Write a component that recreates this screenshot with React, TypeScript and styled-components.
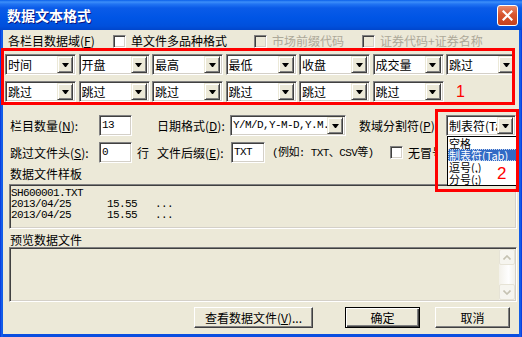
import React from "react";
import styled, { createGlobalStyle } from "styled-components";

const uiFont = `"Noto Sans CJK SC", "Liberation Sans", sans-serif`;
const monoFont = `"Liberation Mono", "Noto Sans CJK SC", monospace`;

const GlobalStyle = createGlobalStyle`
  html, body {
    margin: 0;
    padding: 0;
    background: #fff;
  }
  body {
    font-family: ${uiFont};
    font-size: 12px;
    color: #000;
  }
  * {
    box-sizing: border-box;
  }
`;

const Window = styled.div`
  width: 522px;
  height: 337px;
  display: flex;
  flex-direction: column;
  background: linear-gradient(to right, #0831d9 0, #166aee 2px, #0a4ee0 3px, #0a4ee0 519px, #166aee 520px, #0831d9 522px);
`;

const TitleBar = styled.div`
  height: 30px;
  flex: none;
  display: flex;
  align-items: center;
  justify-content: space-between;
  padding: 0 4px 0 7px;
  background: linear-gradient(
    to bottom,
    #0a5fea 0px,
    #3d8ff9 2px,
    #2275f3 4px,
    #0a5be8 8px,
    #0055e5 18px,
    #0050dc 26px,
    #0046cc 30px
  );
`;

const Title = styled.span`
  color: #fff;
  font-family: ${uiFont};
  font-weight: bold;
  font-size: 14px;
  text-shadow: 1px 1px 0 #0a1883;
`;

const CloseButton = styled.div`
  width: 21px;
  height: 21px;
  border: 1px solid #fff;
  border-radius: 3px;
  background: linear-gradient(to bottom, #e8896a, #d7552f 45%, #c7411c);
  display: flex;
  align-items: center;
  justify-content: center;
  margin-top: 1px;
`;

const Body = styled.div`
  flex: 1;
  margin: 0 3px 3px;
  background: #ece9d8;
  padding: 4px 2px 0 6px;
  display: flex;
  flex-direction: column;
`;

const TopRow = styled.div`
  display: flex;
  align-items: center;
  height: 14px;
  margin-left: -1px;
`;

const Text = styled.span<{
  $w?: number;
  $pl?: number;
  $ml?: number;
  $mono?: boolean;
  $gray?: boolean;
  $clip?: boolean;
}>`
  ${(p) => (p.$w !== undefined ? `width: ${p.$w}px; flex: none;` : "")}
  padding-left: ${(p) => p.$pl ?? 0}px;
  margin-left: ${(p) => p.$ml ?? 0}px;
  font-family: ${(p) => (p.$mono ? monoFont : uiFont)};
  font-size: ${(p) => (p.$mono ? "11px" : "12px")};
  letter-spacing: ${(p) => (p.$mono ? "-0.6px" : "0")};
  color: ${(p) => (p.$gray ? "#aca899" : "#000")};
  white-space: nowrap;
  overflow: ${(p) => (p.$clip ? "hidden" : "visible")};
  line-height: 18px;
`;

const CheckItem = styled.label<{ $w?: number }>`
  display: flex;
  align-items: center;
  gap: 5px;
  ${(p) => (p.$w !== undefined ? `width: ${p.$w}px; flex: none;` : "")}
`;

const CheckBox = styled.span<{ $disabled?: boolean; $ml?: number }>`
  width: 13px;
  height: 13px;
  flex: none;
  margin-left: ${(p) => p.$ml ?? 0}px;
  background: ${(p) => (p.$disabled ? "#ece9d8" : "#fff")};
  border-style: solid;
  border-width: 1px;
  border-color: #808080 #fff #fff #808080;
  box-shadow: inset 1px 1px 0 #404040, inset -1px -1px 0 #d4d0c8;
`;

const FieldsFrame = styled.div`
  margin-left: -8px;
  width: 514px;
  height: 57px;
  border: 3px solid #ff0000;
  padding: 3px 0 0 1px;
  display: grid;
  grid-template-columns: repeat(7, 71px);
  grid-auto-rows: 21px;
  column-gap: 2.5px;
  row-gap: 6px;
  overflow: hidden;
`;

const ComboBox = styled.div<{ $w?: number }>`
  width: ${(p) => (p.$w ? `${p.$w}px` : "100%")};
  height: 21px;
  flex: none;
  display: flex;
  align-items: center;
  background: #fff;
  border-style: solid;
  border-width: 1px;
  border-color: #808080 #fff #fff #808080;
  box-shadow: inset 1px 1px 0 #404040, inset -1px -1px 0 #d4d0c8;
  padding: 2px;
  overflow: hidden;
`;

const ComboText = styled.span<{ $mono?: boolean }>`
  flex: 1;
  min-width: 0;
  overflow: hidden;
  white-space: nowrap;
  font-family: ${(p) => (p.$mono ? monoFont : uiFont)};
  font-size: ${(p) => (p.$mono ? "11px" : "12px")};
  letter-spacing: ${(p) => (p.$mono ? "-0.6px" : "0")};
  line-height: 17px;
`;

const DropButton = styled.span`
  width: 16px;
  height: 17px;
  flex: none;
  background: #ece9d8;
  border-style: solid;
  border-width: 1px;
  border-color: #ece9d8 #404040 #404040 #ece9d8;
  box-shadow: inset 1px 1px 0 #fff, inset -1px -1px 0 #808080;
  display: flex;
  align-items: center;
  justify-content: center;

  &::after {
    content: "";
    width: 1px;
    height: 0;
    border-left: 3px solid transparent;
    border-right: 3px solid transparent;
    border-top: 4px solid #000;
  }
`;

const Marker = styled.span<{ $size: number }>`
  color: #ff0000;
  font-family: "Liberation Sans", sans-serif;
  font-size: ${(p) => p.$size}px;
  line-height: 1;
`;

const MarkerCell = styled.div`
  display: flex;
  align-items: center;
  padding-left: 10px;
`;

const ParamRow = styled.div<{ $mt: number }>`
  display: flex;
  align-items: center;
  height: 21px;
  margin-top: ${(p) => p.$mt}px;
  padding-left: 1px;
`;

const TextBox = styled.div<{ $w: number }>`
  width: ${(p) => p.$w}px;
  height: 21px;
  flex: none;
  background: #fff;
  border-style: solid;
  border-width: 1px;
  border-color: #808080 #fff #fff #808080;
  box-shadow: inset 1px 1px 0 #404040, inset -1px -1px 0 #d4d0c8;
  padding: 1px 0 0 2px;
  font-family: ${monoFont};
  font-size: 11px;
  letter-spacing: -0.6px;
  line-height: 16px;
`;

const SepWrap = styled.div`
  position: relative;
  flex: none;
`;

const DropList = styled.ul`
  position: absolute;
  left: 1px;
  top: 21px;
  width: 71px;
  height: 50px;
  margin: 0;
  padding: 0;
  list-style: none;
  background: #fff;
  border: 1px solid #000;
  z-index: 2;
`;

const DropItem = styled.li<{ $selected?: boolean }>`
  height: 12px;
  line-height: 12px;
  padding-left: 1px;
  font-size: 11px;
  white-space: nowrap;
  overflow: hidden;
  background: ${(p) => (p.$selected ? "#316ac5" : "transparent")};
  color: ${(p) => (p.$selected ? "#fff" : "#000")};
  outline: ${(p) => (p.$selected ? "1px dotted #c8d6f0" : "none")};
  outline-offset: -1px;
`;

const RedFrame = styled.div`
  position: absolute;
  left: -11px;
  top: -6px;
  width: 84px;
  height: 83px;
  border: 3px solid #ff0000;
  z-index: 3;
  pointer-events: none;
`;

const FloatMarker = styled(Marker)`
  position: absolute;
  left: 51px;
  top: 50px;
  z-index: 4;
`;

const SectionLabel = styled.div<{ $mt: number }>`
  margin-top: ${(p) => p.$mt}px;
  height: 14px;
  line-height: 14px;
  padding-left: 1px;
  white-space: nowrap;
`;

const SunkenBox = styled.div<{ $h: number; $mt: number }>`
  height: ${(p) => p.$h}px;
  margin-top: ${(p) => p.$mt}px;
  flex: none;
  background: #ece9d8;
  border-style: solid;
  border-width: 1px;
  border-color: #808080 #fff #fff #808080;
  box-shadow: inset 1px 1px 0 #404040, inset -1px -1px 0 #d4d0c8;
  display: flex;
  overflow: hidden;
`;

const SampleText = styled.pre`
  margin: 0;
  padding: 3px 0 0 1px;
  font-family: ${monoFont};
  font-size: 11px;
  letter-spacing: -0.6px;
  line-height: 11px;
`;

const PreviewArea = styled.div`
  flex: 1;
`;

const ScrollBar = styled.div`
  width: 16px;
  flex: none;
  margin: 1px 1px 1px 0;
  display: flex;
  flex-direction: column;
  justify-content: space-between;
  background: linear-gradient(to right, #f3f1ea, #fefefe 60%, #f3f1ea);
`;

const ScrollArrow = styled.div`
  width: 16px;
  height: 16px;
  border: 1px solid #e6e3d6;
  border-radius: 2px;
  background: #f6f5ef;
  display: flex;
  align-items: center;
  justify-content: center;
`;

const ButtonRow = styled.div`
  display: flex;
  justify-content: flex-end;
  align-items: center;
  margin-top: 5px;
  padding-right: 7px;
  height: 21px;
`;

const Button = styled.div<{ $w: number; $ml: number; $default?: boolean }>`
  width: ${(p) => p.$w}px;
  height: 21px;
  margin-left: ${(p) => p.$ml}px;
  background: #ece9d8;
  border: 1px solid;
  border-color: ${(p) => (p.$default ? "#000" : "#fff #404040 #404040 #fff")};
  box-shadow: ${(p) =>
    p.$default
      ? "inset 1px 1px 0 #fff, inset -1px -1px 0 #404040, inset -2px -2px 0 #808080"
      : "inset -1px -1px 0 #808080"};
  display: flex;
  align-items: center;
  justify-content: center;
  font-size: 12px;
  white-space: nowrap;
`;

const fieldsRow1 = ["时间", "开盘", "最高", "最低", "收盘", "成交量", "跳过"];
const fieldsRow2 = ["跳过", "跳过", "跳过", "跳过", "跳过", "跳过"];

const sample = `SH600001.TXT
2013/04/25      15.55   ...
2013/04/25      15.55   ...`;

const Combo: React.FC<{ value: string; w?: number; mono?: boolean }> = ({ value, w, mono }) => (
  <ComboBox $w={w}>
    <ComboText $mono={mono}>{value}</ComboText>
    <DropButton />
  </ComboBox>
);

const Chevron: React.FC<{ up?: boolean }> = ({ up }) => (
  <svg width="8" height="5" viewBox="0 0 8 5">
    <path d={up ? "M0.5 4.5 L4 1 L7.5 4.5" : "M0.5 0.5 L4 4 L7.5 0.5"} fill="none" stroke="#c5c2b2" strokeWidth="1.6" />
  </svg>
);

export default function App() {
  return (
    <>
      <GlobalStyle />
      <Window>
        <TitleBar>
          <Title>数据文本格式</Title>
          <CloseButton>
            <svg width="11" height="11" viewBox="0 0 11 11">
              <path d="M1.5 1.5 L9.5 9.5 M9.5 1.5 L1.5 9.5" stroke="#fff" strokeWidth="2.2" strokeLinecap="square" />
            </svg>
          </CloseButton>
        </TitleBar>
        <Body>
          <TopRow>
            <Text $w={105}>
              各栏目数据域(<u>F</u>)
            </Text>
            <CheckItem $w={141}>
              <CheckBox />
              <Text>单文件多品种格式</Text>
            </CheckItem>
            <CheckItem $w={108}>
              <CheckBox $disabled />
              <Text $gray>市场前缀代码</Text>
            </CheckItem>
            <CheckItem>
              <CheckBox $disabled />
              <Text $gray>证券代码+证券名称</Text>
            </CheckItem>
          </TopRow>

          <FieldsFrame>
            {fieldsRow1.map((f, i) => (
              <Combo key={"a" + i} value={f} />
            ))}
            {fieldsRow2.map((f, i) => (
              <Combo key={"b" + i} value={f} />
            ))}
            <MarkerCell>
              <Marker $size={16}>1</Marker>
            </MarkerCell>
          </FieldsFrame>

          <ParamRow $mt={10}>
            <Text $w={89}>
              栏目数量(<u>N</u>):
            </Text>
            <TextBox $w={33}>13</TextBox>
            <Text $w={25} />
            <Text $w={73}>
              日期格式(<u>D</u>):
            </Text>
            <Combo value="Y/M/D,Y-M-D,Y.M.D" w={116} mono />
            <Text $w={13} />
            <Text $w={87}>
              数域分割符(<u>P</u>):
            </Text>
            <SepWrap>
              <Combo value="制表符(Tab)" w={70} />
              <DropList>
                <DropItem>空格</DropItem>
                <DropItem $selected>制表符(Tab)</DropItem>
                <DropItem>逗号(,)</DropItem>
                <DropItem>分号(;)</DropItem>
              </DropList>
              <RedFrame />
              <FloatMarker $size={17}>2</FloatMarker>
            </SepWrap>
          </ParamRow>

          <ParamRow $mt={6}>
            <Text $w={89}>
              跳过文件头(<u>S</u>):
            </Text>
            <TextBox $w={33}>0</TextBox>
            <Text $w={25} $pl={5}>
              行
            </Text>
            <Text $w={74}>
              文件后缀(<u>E</u>):
            </Text>
            <TextBox $w={34}>TXT</TextBox>
            <Text $w={118} $ml={7} $mono>
              (例如: TXT、CSV等)
            </Text>
            <CheckBox />
            <Text $w={28} $ml={5} $clip>
              无冒号时间格式
            </Text>
          </ParamRow>

          <SectionLabel $mt={4}>数据文件样板</SectionLabel>
          <SunkenBox $h={45} $mt={3}>
            <SampleText>{sample}</SampleText>
          </SunkenBox>

          <SectionLabel $mt={4}>预览数据文件</SectionLabel>
          <SunkenBox $h={55} $mt={0}>
            <PreviewArea />
            <ScrollBar>
              <ScrollArrow>
                <Chevron up />
              </ScrollArrow>
              <ScrollArrow>
                <Chevron />
              </ScrollArrow>
            </ScrollBar>
          </SunkenBox>

          <ButtonRow>
            <Button $w={119} $ml={0}>
              查看数据文件(<u>V</u>)...
            </Button>
            <Button $w={75} $ml={32} $default>
              确定
            </Button>
            <Button $w={75} $ml={15}>
              取消
            </Button>
          </ButtonRow>
        </Body>
      </Window>
    </>
  );
}
